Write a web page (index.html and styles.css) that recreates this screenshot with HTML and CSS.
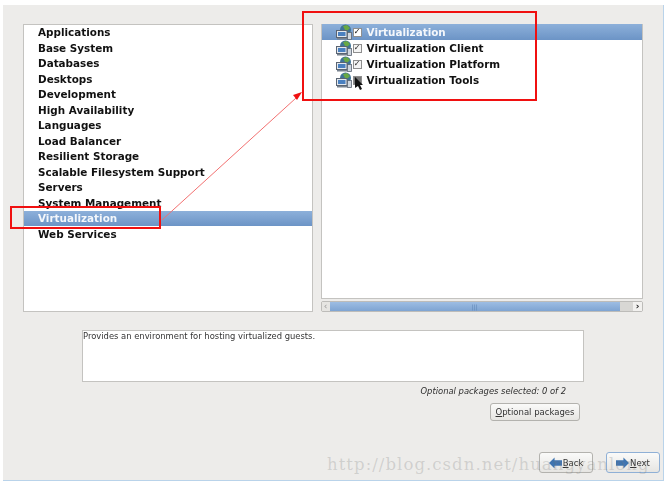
FILE: index.html
```html
<!DOCTYPE html>
<html lang="en">
<head>
    <meta charset="UTF-8">
    <title>Package Selection</title>
    <link rel="stylesheet" href="styles.css">
</head>
<body>
    <svg width="0" height="0" class="defs">
        <symbol id="pkg" viewBox="0 0 16 16">
            <circle cx="9.5" cy="6" r="5.5" fill="#3f7396"/>
            <path d="M7 2l4-1 3 3-3 3-2-1-1-2z" fill="#69a944"/>
            <rect x="0.5" y="6.5" width="10.5" height="7" fill="#e4e9ef" stroke="#5a6472"/>
            <rect x="2" y="8" width="7.5" height="4" fill="#4a80c0"/>
            <rect x="11.5" y="8.5" width="4" height="7" fill="#cfd6de" stroke="#5a6472" stroke-width="0.8"/>
            <rect x="1" y="14" width="10" height="1.5" fill="#77818e"/>
        </symbol>
    </svg>

    <div class="window">
        <div class="panes">
            <ul class="list groups">
                <li>Applications</li>
                <li>Base System</li>
                <li>Databases</li>
                <li>Desktops</li>
                <li>Development</li>
                <li>High Availability</li>
                <li>Languages</li>
                <li>Load Balancer</li>
                <li>Resilient Storage</li>
                <li>Scalable Filesystem Support</li>
                <li>Servers</li>
                <li>System Management</li>
                <li class="selected">Virtualization</li>
                <li>Web Services</li>
            </ul>

            <div class="right-pane">
                <ul class="list packages">
                    <li class="selected"><svg class="pkg-icon"><use href="#pkg"/></svg><span class="check on">&#10003;</span>Virtualization</li>
                    <li><svg class="pkg-icon"><use href="#pkg"/></svg><span class="check">&#10003;</span>Virtualization Client</li>
                    <li><svg class="pkg-icon"><use href="#pkg"/></svg><span class="check">&#10003;</span>Virtualization Platform</li>
                    <li><svg class="pkg-icon"><use href="#pkg"/></svg><span class="check hover"></span>Virtualization Tools</li>
                </ul>
                <div class="scrollbar">
                    <span class="arrow">&lsaquo;</span>
                    <div class="track"><div class="thumb">|||</div></div>
                    <span class="arrow dark">&rsaquo;</span>
                </div>
            </div>
        </div>

        <div class="details">
            <div class="description">Provides an environment for hosting virtualized guests.</div>
            <div class="selected-count">Optional packages selected: 0 of 2</div>
            <div class="optional-row">
                <button class="btn optional"><u>O</u>ptional packages</button>
            </div>
        </div>

        <div class="footer">
            <button class="btn nav">
                <svg width="13" height="12" viewBox="0 0 14 12"><path d="M0 6l6-6v3h8v6H6v3z" fill="#3f74b0"/></svg>
                <span><u>B</u>ack</span>
            </button>
            <button class="btn nav focused">
                <svg width="13" height="12" viewBox="0 0 14 12"><path d="M14 6L8 0v3H0v6h8v3z" fill="#3f74b0"/></svg>
                <span><u>N</u>ext</span>
            </button>
        </div>
    </div>

    <!-- annotations on top of the screenshot -->
    <div class="mark mark-left"></div>
    <div class="mark mark-right"></div>
    <svg class="arrow-line" width="668" height="487" viewBox="0 0 668 487">
        <line x1="162" y1="220" x2="296" y2="98" stroke="#f27070" stroke-width="1"/>
        <path d="M302 92l-9 3 4 5z" fill="#f01010"/>
    </svg>
    <svg class="cursor" width="9" height="13" viewBox="0 0 9 13"><path d="M1 0v11l3-2 2 4 2-1-2-4h3z" fill="#111"/></svg>
    <div class="watermark">http://blog.csdn.net/huangyanlong</div>
</body>
</html>
```

FILE: styles.css
```css
* {
    box-sizing: border-box;
}
html, body {
    height: 100%;
}
body {
    margin: 0;
    padding: 5px 4px 6px 3px;
    background-color: #fff;
    font-family: "DejaVu Sans", sans-serif;
    color: #2e2e2e;
    overflow: hidden;
}
.defs {
    display: block;
}
.window {
    height: 476px;
    padding: 19px 20px 8px 20px;
    background-color: #edecea;
    border-right: 1px solid #b9d3ea;
    border-bottom: 1px solid #b9d3ea;
    filter: blur(0.35px);
}
.panes {
    display: flex;
    gap: 8px;
    height: 288px;
}
.list {
    list-style: none;
    margin: 0;
    padding: 0;
    background-color: #fff;
    border: 1px solid #c4c3c0;
    font-size: 10.4px;
    font-weight: bold;
    color: #111;
}
.groups {
    width: 291px;
}
.groups li {
    height: 15.5px;
    line-height: 15.5px;
    padding-left: 14px;
}
.groups .selected {
    margin-top: -0.5px;
    margin-bottom: 0.5px;
}
.selected {
    background: linear-gradient(#8db0da, #6c94c6);
    color: #f4f7fb;
}
.right-pane {
    width: 324px;
    display: flex;
    flex-direction: column;
    gap: 2px;
}
.packages {
    flex: 1;
    border-top: 0;
}
.packages li {
    display: flex;
    align-items: center;
    height: 16px;
    padding-left: 14px;
}
.pkg-icon {
    width: 16px;
    height: 16px;
    margin-right: 1px;
}
.check {
    display: flex;
    align-items: center;
    justify-content: center;
    width: 9px;
    height: 9px;
    margin-right: 5px;
    background-color: #f4f4f4;
    border: 1px solid #8f8f8f;
    font-size: 8px;
    line-height: 1;
    color: #222;
}
.check.on {
    background-color: #fff;
    color: #000;
}
.check.hover {
    background-color: #777;
}
.scrollbar {
    display: flex;
    height: 11px;
    background-color: #d8d7d4;
    border: 1px solid #bdbcb9;
    border-radius: 2px;
    font-size: 9px;
    line-height: 9px;
}
.arrow {
    width: 8px;
    text-align: center;
    color: #999;
    background-color: #e6e5e2;
}
.arrow.dark {
    width: 9px;
    color: #222;
    font-weight: bold;
    background-color: #f2f1ef;
}
.track {
    flex: 1;
    padding-right: 13px;
}
.thumb {
    height: 100%;
    background: linear-gradient(#9dbde3, #7ea4d2);
    color: #5c83b4;
    font-size: 6px;
    line-height: 9px;
    text-align: center;
}
.details {
    margin-top: 18px;
    padding-left: 59px;
}
.description {
    width: 502px;
    height: 52px;
    padding: 0;
    background-color: #fff;
    border: 1px solid #c4c3c0;
    font-size: 8.4px;
    line-height: 11px;
    color: #333;
}
.selected-count {
    width: 484px;
    margin-top: 3px;
    font-size: 8.4px;
    font-style: italic;
    line-height: 12px;
    text-align: right;
}
.optional-row {
    display: flex;
    justify-content: flex-end;
    width: 498px;
    margin-top: 6px;
}
.btn {
    height: 18px;
    padding: 0;
    background: linear-gradient(#fafaf9, #e6e5e2);
    border: 1px solid #b3b2ae;
    border-radius: 3px;
    font-family: inherit;
    font-size: 8.5px;
    color: #333;
}
.optional {
    width: 90px;
}
.footer {
    display: flex;
    justify-content: flex-end;
    gap: 13px;
    margin-top: 31px;
    margin-right: -17px;
}
.nav {
    display: flex;
    align-items: center;
    justify-content: center;
    gap: 1px;
    width: 54px;
    height: 21px;
}
.focused {
    border: 1px solid #8fb0d6;
}
.mark {
    position: absolute;
    border: 2px solid #f01010;
}
.mark-left {
    left: 10px;
    top: 206px;
    width: 151px;
    height: 23px;
}
.mark-right {
    left: 302px;
    top: 11px;
    width: 235px;
    height: 90px;
}
.arrow-line {
    position: absolute;
    left: 0;
    top: 0;
}
.cursor {
    position: absolute;
    left: 354px;
    top: 77px;
}
.watermark {
    position: absolute;
    left: 327px;
    top: 455px;
    font-family: "DejaVu Serif", serif;
    font-size: 16.5px;
    letter-spacing: 1.05px;
    color: rgba(120, 120, 120, 0.25);
    white-space: nowrap;
}
```
